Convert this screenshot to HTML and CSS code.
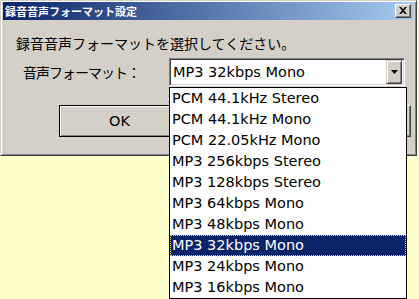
FILE: index.html
```html
<!DOCTYPE html>
<html lang="ja">

<head>
    <meta charset="UTF-8">
    <title>録音音声フォーマット設定</title>
    <link rel="stylesheet" href="styles.css">
</head>

<body>

    <!-- Dialog -->
    <div class="window">
        <div class="titlebar">
            <span class="title">録音音声フォーマット設定</span>
            <div class="close-btn">
                <svg width="8" height="7" viewBox="0 0 8 7">
                    <path d="M0 0 L2 0 L4 2 L6 0 L8 0 L5 3.5 L8 7 L6 7 L4 5 L2 7 L0 7 L3 3.5 Z" fill="#000"/>
                </svg>
            </div>
        </div>

        <div class="content">
            <p class="prompt">録音音声フォーマットを選択してください。</p>

            <div class="form-row">
                <span class="label">音声フォーマット：</span>
                <div class="combo">
                    <span class="combo-value">MP3 32kbps Mono</span>
                    <div class="combo-btn">
                        <svg width="7" height="4" viewBox="0 0 7 4">
                            <path d="M0 0 H7 L3.5 4 Z" fill="#000"/>
                        </svg>
                    </div>

                    <!-- open drop-down list -->
                    <ul class="dropdown">
                        <li>PCM 44.1kHz Stereo</li>
                        <li>PCM 44.1kHz Mono</li>
                        <li>PCM 22.05kHz Mono</li>
                        <li>MP3 256kbps Stereo</li>
                        <li>MP3 128kbps Stereo</li>
                        <li>MP3 64kbps Mono</li>
                        <li>MP3 48kbps Mono</li>
                        <li class="selected">MP3 32kbps Mono</li>
                        <li>MP3 24kbps Mono</li>
                        <li>MP3 16kbps Mono</li>
                    </ul>
                </div>
            </div>

            <div class="buttons">
                <div class="button default">OK</div>
                <div class="button">キャンセル</div>
            </div>
        </div>
    </div>

</body>

</html>
```

FILE: styles.css
```css
html {
    background-color: #ffffcc;
}

body {
    margin: 0;
    min-height: 299px;
    font-family: "DejaVu Sans", "Noto Sans CJK JP", sans-serif;
    color: #000;
}

.window {
    width: 417px;
    box-sizing: border-box;
    background-color: #d4d0c8;
    border-top: 1px solid #d4d0c8;
    border-left: 1px solid #d4d0c8;
    border-right: 1px solid #404040;
    border-bottom: 1px solid #404040;
    box-shadow: inset 1px 1px #ffffff, inset -1px -1px #808080;
    padding: 1px 2px 18px 2px;
}

.titlebar {
    height: 18px;
    background: linear-gradient(to right, #0a246a, #a6caf0);
    display: flex;
    align-items: center;
    justify-content: space-between;
    padding: 0 3px 0 2px;
}

.title {
    color: #fff;
    font-family: "Noto Sans CJK JP", sans-serif;
    font-weight: bold;
    font-size: 11px;
    line-height: 14px;
}

.close-btn {
    width: 16px;
    height: 14px;
    box-sizing: border-box;
    background-color: #d4d0c8;
    border-top: 1px solid #ffffff;
    border-left: 1px solid #ffffff;
    border-right: 1px solid #404040;
    border-bottom: 1px solid #404040;
    box-shadow: inset -1px -1px #808080;
    display: flex;
    align-items: center;
    justify-content: center;
    padding-bottom: 1px;
}

.content {
    padding: 0 0 0 13px;
}

.prompt {
    margin: 15px 0 0 0;
    font-family: "Noto Sans CJK JP", sans-serif;
    font-size: 14px;
    line-height: 16px;
}

.form-row {
    display: flex;
    align-items: center;
    margin-top: 7px;
}

.label {
    width: 153px;
    padding-left: 7px;
    box-sizing: border-box;
    font-family: "Noto Sans CJK JP", sans-serif;
    font-size: 14px;
    letter-spacing: -1px;
}

.combo {
    position: relative;
    z-index: 5;
    width: 236px;
    height: 28px;
    box-sizing: border-box;
    background-color: #fff;
    border-top: 1px solid #808080;
    border-left: 1px solid #808080;
    border-right: 1px solid #ffffff;
    border-bottom: 1px solid #ffffff;
    box-shadow: inset 1px 1px #404040, inset -1px -1px #d4d0c8;
    display: flex;
    align-items: center;
    justify-content: space-between;
    padding: 2px 2px 2px 3px;
}

.combo-value {
    font-size: 14.5px;
}

.combo-btn {
    width: 16px;
    height: 24px;
    box-sizing: border-box;
    background-color: #d4d0c8;
    border-top: 1px solid #d4d0c8;
    border-left: 1px solid #d4d0c8;
    border-right: 1px solid #404040;
    border-bottom: 1px solid #404040;
    box-shadow: inset 1px 1px #ffffff, inset -1px -1px #808080;
    display: flex;
    align-items: center;
    justify-content: center;
}

.dropdown {
    position: absolute;
    top: 28px;
    left: -1px;
    width: 238px;
    margin: 0;
    padding: 0;
    list-style: none;
    background-color: #fff;
    border: 1px solid #000;
    box-sizing: border-box;
}

.dropdown li {
    display: block;
    height: 21px;
    line-height: 21px;
    font-size: 14.5px;
    padding-left: 2px;
    box-sizing: border-box;
    white-space: nowrap;
}

.dropdown li.selected {
    background-color: #0a246a;
    color: #fff;
    outline: 1px dotted #ffd24a;
    outline-offset: -1px;
}

.buttons {
    display: flex;
    gap: 110px;
    margin-top: 19px;
    padding-left: 43px;
}

.button {
    width: 121px;
    height: 32px;
    box-sizing: border-box;
    background-color: #d4d0c8;
    border-top: 1px solid #ffffff;
    border-left: 1px solid #ffffff;
    border-right: 1px solid #404040;
    border-bottom: 1px solid #404040;
    box-shadow: inset -1px -1px #808080;
    display: flex;
    align-items: center;
    justify-content: center;
    font-size: 14.5px;
}

.button.default {
    border: 1px solid #000;
    box-shadow: inset 1px 1px #ffffff, inset -1px -1px #808080;
}
```
